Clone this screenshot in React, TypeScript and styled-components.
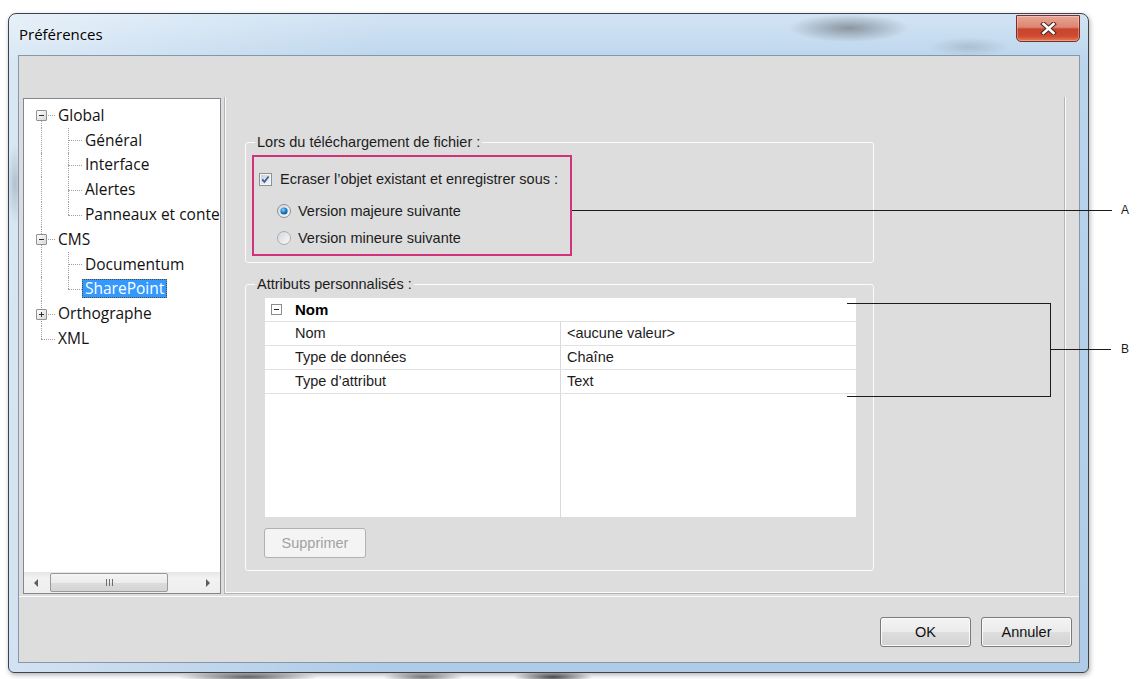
import React from 'react';
import styled, {createGlobalStyle} from 'styled-components';

type TreeItem = {
    label: string
    guides: boolean[]
    first?: boolean
    last?: boolean
    expander?: 'open' | 'closed'
    selected?: boolean
}

const TREE: TreeItem[] = [
    {label: 'Global', guides: [], first: true, expander: 'open'},
    {label: 'Général', guides: [true]},
    {label: 'Interface', guides: [true]},
    {label: 'Alertes', guides: [true]},
    {label: 'Panneaux et conte', guides: [true], last: true},
    {label: 'CMS', guides: [], expander: 'open'},
    {label: 'Documentum', guides: [true]},
    {label: 'SharePoint', guides: [true], last: true, selected: true},
    {label: 'Orthographe', guides: [], expander: 'closed'},
    {label: 'XML', guides: [], last: true},
]

const PROPS = [
    {name: 'Nom', value: '<aucune valeur>'},
    {name: 'Type de données', value: 'Chaîne'},
    {name: 'Type d’attribut', value: 'Text'},
]

const GlobalStyle = createGlobalStyle`
  html, body {
    margin: 0;
    padding: 0;
    background: #fff;
  }
  body {
    width: 1139px;
    height: 679px;
    overflow: hidden;
  }
  * {
    box-sizing: border-box;
  }
`

const CheckBox = () => (
    <svg width="13" height="13" viewBox="0 0 13 13">
        <defs>
            <linearGradient id="cbFill" x1="0" y1="0" x2="1" y2="1">
                <stop offset="0" stopColor="#c4cfdc"/>
                <stop offset="1" stopColor="#f5f8fb"/>
            </linearGradient>
        </defs>
        <rect x="0.5" y="0.5" width="12" height="12" fill="#f6f6f6" stroke="#8e8f8f"/>
        <rect x="2" y="2" width="9" height="9" fill="url(#cbFill)"/>
        <path d="M3.3 6.4 L5.4 8.9 L9.6 3.4" stroke="#3d5a96" strokeWidth="1.7" fill="none"/>
    </svg>
)

const Radio = ({checked}: { checked?: boolean }) => (
    <svg width="14" height="14" viewBox="0 0 14 14">
        <defs>
            <linearGradient id="rdFill" x1="0" y1="0" x2="1" y2="1">
                <stop offset="0" stopColor="#d2d6db"/>
                <stop offset="1" stopColor="#fafafa"/>
            </linearGradient>
            <radialGradient id="rdDot" cx="0.4" cy="0.35" r="0.7">
                <stop offset="0" stopColor="#8fd6ff"/>
                <stop offset="0.5" stopColor="#1f86d2"/>
                <stop offset="1" stopColor="#0c4f8c"/>
            </radialGradient>
        </defs>
        <circle cx="7" cy="7" r="6.5" fill="url(#rdFill)" stroke={checked ? '#8e8f8f' : '#a9abad'}/>
        {checked && <circle cx="7" cy="7" r="3.6" fill="url(#rdDot)"/>}
    </svg>
)

const CloseGlyph = () => (
    <svg width="17" height="13" viewBox="0 0 17 13">
        <path d="M3.5 2 L13.5 11 M13.5 2 L3.5 11" stroke="#4a2a24" strokeWidth="4.6" strokeLinecap="square"/>
        <path d="M3.5 2 L13.5 11 M13.5 2 L3.5 11" stroke="#fff" strokeWidth="2.6" strokeLinecap="square"/>
    </svg>
)

export default function App() {
    return (
        <Page>
            <GlobalStyle/>
            <Window>
                <TitleBar>
                    <Title>Préférences</Title>
                    <CloseButton><CloseGlyph/></CloseButton>
                </TitleBar>
                <Client>
                    <ClientBody>
                        <Tree>
                            <TreeList>
                                {TREE.map(item => (
                                    <TreeRow key={item.label}>
                                        {item.guides.map((on, i) => <Guide key={i} $on={on}/>)}
                                        <Branch $first={item.first} $last={item.last}>
                                            {item.expander && <Expander $open={item.expander === 'open'}/>}
                                        </Branch>
                                        <TreeLabel $selected={item.selected}>{item.label}</TreeLabel>
                                    </TreeRow>
                                ))}
                            </TreeList>
                            <HScroll>
                                <ScrollArrow><Arrow $dir="left"/></ScrollArrow>
                                <Thumb><Grip/></Thumb>
                                <Track/>
                                <ScrollArrow><Arrow $dir="right"/></ScrollArrow>
                            </HScroll>
                        </Tree>
                        <SettingsPanel>
                            <Group $top={36}>
                                <Legend>Lors du téléchargement de fichier :</Legend>
                                <GroupBody $pad="4px 0 6px 6px">
                                    <Highlight>
                                        <OptionRow $top={11}>
                                            <CheckBox/>
                                            <span>Ecraser l’objet existant et enregistrer sous :</span>
                                        </OptionRow>
                                        <OptionRow $top={10} $indent>
                                            <Radio checked/>
                                            <span>Version majeure suivante</span>
                                        </OptionRow>
                                        <OptionRow $top={5} $indent>
                                            <Radio/>
                                            <span>Version mineure suivante</span>
                                        </OptionRow>
                                    </Highlight>
                                </GroupBody>
                            </Group>
                            <Group $top={12}>
                                <Legend>Attributs personnalisés :</Legend>
                                <GroupBody $pad="5px 0 12px 19px">
                                    <PropGrid>
                                        <GridHeader>
                                            <Collapse/>
                                            <span>Nom</span>
                                        </GridHeader>
                                        {PROPS.map(p => (
                                            <PropRow key={p.name}>
                                                <PropName>{p.name}</PropName>
                                                <PropValue>{p.value}</PropValue>
                                            </PropRow>
                                        ))}
                                        <PropFiller>
                                            <PropName/>
                                            <PropValue/>
                                        </PropFiller>
                                    </PropGrid>
                                    <DisabledButton disabled>Supprimer</DisabledButton>
                                </GroupBody>
                            </Group>
                        </SettingsPanel>
                    </ClientBody>
                    <Separator/>
                    <Footer>
                        <DialogButton>OK</DialogButton>
                        <DialogButton>Annuler</DialogButton>
                    </Footer>
                </Client>
            </Window>
            <Backdrop/>
            <Callouts>
                <svg width="1139" height="679" viewBox="0 0 1139 679">
                    <g stroke="#1b1b1b" strokeWidth="1" fill="none" shapeRendering="crispEdges">
                        <line x1="572" y1="210.5" x2="1112" y2="210.5"/>
                        <polyline points="847,303.5 1050.5,303.5 1050.5,396.5 847,396.5"/>
                        <line x1="1050" y1="349.5" x2="1111" y2="349.5"/>
                    </g>
                </svg>
                <CalloutLetter style={{left: 1121, top: 203}}>A</CalloutLetter>
                <CalloutLetter style={{left: 1121, top: 342}}>B</CalloutLetter>
            </Callouts>
        </Page>
    );
}

const Page = styled.div`
  position: relative;
  width: 1139px;
  height: 679px;
  padding: 13px 0 0 8px;
  background: #fff;
  overflow: hidden;
`

const Window = styled.div`
  width: 1081px;
  height: 660px;
  padding: 0 8px 9px 9px;
  border: 1px solid #3a444e;
  border-radius: 8px 8px 6px 6px;
  box-shadow: 1px 2px 5px rgba(0, 0, 0, 0.3);
  background:
    radial-gradient(ellipse 70px 8px at 220px 48px, rgba(80, 90, 100, 0.22), transparent),
    radial-gradient(ellipse 60px 14px at 840px 14px, rgba(60, 60, 60, 0.45), transparent),
    radial-gradient(ellipse 40px 10px at 960px 33px, rgba(90, 100, 110, 0.22), transparent),
    radial-gradient(ellipse 8px 40px at 6px 170px, rgba(60, 80, 100, 0.25), transparent),
    linear-gradient(90deg, rgba(255, 255, 255, 0.45), rgba(255, 255, 255, 0) 35%),
    linear-gradient(#d3e4f4, #bad4ec 50px, #afcbe7);
`

const TitleBar = styled.div`
  height: 41px;
  display: flex;
  justify-content: space-between;
  align-items: flex-start;
`

const Title = styled.div`
  padding-left: 1px;
  line-height: 41px;
  font-family: "Open Sans", "Noto Sans", sans-serif;
  font-size: 15px;
  color: #000;
  text-shadow: 0 0 8px rgba(255, 255, 255, 0.9);
`

const CloseButton = styled.div`
  width: 64px;
  height: 27px;
  margin-top: 1px;
  display: flex;
  align-items: center;
  justify-content: center;
  border: 1px solid #7c2e22;
  border-radius: 0 0 5px 5px;
  background: linear-gradient(#eaa594 0%, #dc8571 45%, #c8442d 52%, #ce492f 80%, #e07c57 100%);
  box-shadow: inset 0 0 0 1px rgba(255, 255, 255, 0.3);
`

const Client = styled.div`
  height: 608px;
  border: 1px solid #8597a9;
  background: #dddddd;
`

const ClientBody = styled.div`
  display: flex;
  align-items: flex-start;
  height: 538px;
  padding: 41px 0 0 4px;
`

const Tree = styled.div`
  width: 198px;
  height: 496px;
  margin-top: 1px;
  display: flex;
  flex-direction: column;
  border: 1px solid #828790;
  background: #fff;
`

const TreeList = styled.div`
  flex: 1;
  padding: 4px 0 0 6px;
  overflow: hidden;
  font-family: "Open Sans", "Noto Sans", sans-serif;
  font-size: 15.5px;
  color: #111;
`

const TreeRow = styled.div`
  height: 24.8px;
  display: flex;
  align-items: center;
`

const Guide = styled.div<{ $on: boolean }>`
  position: relative;
  flex: 0 0 27px;
  align-self: stretch;

  &::before {
    content: "";
    display: ${p => (p.$on ? 'block' : 'none')};
    position: absolute;
    left: 11px;
    top: 0;
    bottom: 0;
    border-left: 1px dotted #a0a0a0;
  }
`

const Branch = styled.div<{ $first?: boolean, $last?: boolean }>`
  position: relative;
  flex: 0 0 25px;
  align-self: stretch;

  &::before {
    content: "";
    position: absolute;
    left: 11px;
    top: ${p => (p.$first ? '50%' : '0')};
    bottom: ${p => (p.$last ? '50%' : '0')};
    border-left: 1px dotted #a0a0a0;
  }
  &::after {
    content: "";
    position: absolute;
    left: 11px;
    right: 0;
    top: 50%;
    border-top: 1px dotted #a0a0a0;
  }
`

const Expander = styled.div<{ $open: boolean }>`
  position: absolute;
  z-index: 1;
  left: 6px;
  top: 50%;
  width: 11px;
  height: 11px;
  margin-top: -5px;
  border: 1px solid #919191;
  border-radius: 1px;
  background: linear-gradient(135deg, #ffffff, #d7d7d7);

  &::before {
    content: "";
    position: absolute;
    left: 2px;
    top: 4px;
    width: 5px;
    height: 1px;
    background: #303030;
  }
  &::after {
    content: "";
    display: ${p => (p.$open ? 'none' : 'block')};
    position: absolute;
    left: 4px;
    top: 2px;
    width: 1px;
    height: 5px;
    background: #303030;
  }
`

const TreeLabel = styled.span<{ $selected?: boolean }>`
  padding: 0 3px;
  line-height: 19px;
  white-space: nowrap;
  background: ${p => (p.$selected ? '#3399ff' : 'transparent')};
  color: ${p => (p.$selected ? '#fff' : 'inherit')};
  outline: ${p => (p.$selected ? '1px dotted #5a4a2a' : 'none')};
  outline-offset: -1px;
`

const HScroll = styled.div`
  height: 21px;
  display: flex;
  align-items: center;
  background: linear-gradient(#e6e6e6, #f2f2f2 30%, #eeeeee);
`

const ScrollArrow = styled.div`
  flex: 0 0 24px;
  height: 100%;
  display: flex;
  align-items: center;
  justify-content: center;
`

const Arrow = styled.div<{ $dir: 'left' | 'right' }>`
  width: 0;
  height: 0;
  border-top: 4px solid transparent;
  border-bottom: 4px solid transparent;
  ${p => (p.$dir === 'left' ? 'border-right: 4px solid #5c5c5c;' : 'border-left: 4px solid #5c5c5c;')}
`

const Thumb = styled.div`
  flex: 0 0 118px;
  height: 19px;
  margin-left: 2px;
  display: flex;
  align-items: center;
  justify-content: center;
  border: 1px solid #9a9a9a;
  border-radius: 2px;
  background: linear-gradient(#f4f4f4, #ececec 50%, #dcdcdc 51%, #d4d4d4);
`

const Grip = styled.div`
  width: 7px;
  height: 7px;
  background: repeating-linear-gradient(90deg, #6e6e6e 0 1px, transparent 1px 3px);
`

const Track = styled.div`
  flex: 1;
`

const SettingsPanel = styled.div`
  width: 842px;
  height: 497px;
  margin-left: 3px;
  padding-left: 20px;
  border-left: 1px solid #b4b4b4;
  border-right: 1px solid #fafafa;
  border-bottom: 1px solid #b4b4b4;
  box-shadow: inset 1px 0 0 #fafafa, inset -1px 0 0 #b4b4b4, inset 0 -1px 0 #fafafa;
  font-family: "Liberation Sans", Arial, sans-serif;
  font-size: 14.5px;
  color: #1c1c1c;
`

const Group = styled.fieldset<{ $top: number }>`
  width: 629px;
  min-width: 0;
  margin: ${p => p.$top}px 0 0;
  padding: 0;
  border: 1px solid #fbfbfb;
  border-radius: 3px;
`

const Legend = styled.legend`
  margin-left: 9px;
  padding: 0 2px;
  line-height: 18px;
`

const GroupBody = styled.div<{ $pad: string }>`
  padding: ${p => p.$pad};
`

const Highlight = styled.div`
  width: 320px;
  height: 101px;
  padding-left: 5px;
  border: 2px solid #d2327c;
`

const OptionRow = styled.div<{ $top: number, $indent?: boolean }>`
  height: 22px;
  margin-top: ${p => p.$top}px;
  padding-left: ${p => (p.$indent ? 18 : 0)}px;
  display: flex;
  align-items: center;
  gap: ${p => (p.$indent ? 7 : 8)}px;
  white-space: nowrap;

  svg {
    flex: none;
  }
`

const PropGrid = styled.div`
  width: 591px;
  height: 219px;
  display: flex;
  flex-direction: column;
  background: #fff;
`

const GridHeader = styled.div`
  height: 24px;
  flex: none;
  display: flex;
  align-items: center;
  padding-left: 6px;
  border-bottom: 1px solid #e2e2e2;
  font-weight: bold;
  font-size: 15px;
  color: #000;

  span {
    margin-left: 13px;
  }
`

const Collapse = styled.div`
  position: relative;
  width: 11px;
  height: 11px;
  border: 1px solid #8c8c8c;
  background: #fff;

  &::after {
    content: "";
    position: absolute;
    left: 2px;
    top: 4px;
    width: 5px;
    height: 1px;
    background: #222;
  }
`

const PropRow = styled.div`
  height: 24px;
  flex: none;
  display: grid;
  grid-template-columns: 296px 1fr;
  border-bottom: 1px solid #e2e2e2;
  line-height: 23px;
`

const PropFiller = styled.div`
  flex: 1;
  display: grid;
  grid-template-columns: 296px 1fr;
`

const PropName = styled.div`
  padding-left: 30px;
  border-right: 1px solid #d9d9d9;
`

const PropValue = styled.div`
  padding-left: 6px;
`

const DisabledButton = styled.button`
  display: block;
  width: 102px;
  height: 30px;
  margin: 11px 0 0 -1px;
  padding: 0;
  border: 1px solid #adb2b5;
  border-radius: 3px;
  background: #f4f4f4;
  font-family: "Liberation Sans", Arial, sans-serif;
  font-size: 14.5px;
  color: #a2a2a2;
`

const Separator = styled.div`
  height: 1px;
  margin-top: 2px;
  background: #fafafa;
`

const Footer = styled.div`
  display: flex;
  justify-content: flex-end;
  gap: 10px;
  padding: 20px 7px 0 0;
`

const DialogButton = styled.button`
  width: 91px;
  height: 30px;
  padding: 0;
  border: 1px solid #7a7a7a;
  border-radius: 3px;
  background: linear-gradient(#f3f3f3 0%, #ebebeb 50%, #dedede 51%, #d2d2d2 100%);
  box-shadow: inset 0 0 0 1px #fbfbfb;
  font-family: "Liberation Sans", Arial, sans-serif;
  font-size: 14.5px;
  color: #111;
`

const Backdrop = styled.div`
  height: 6px;
  background:
    radial-gradient(ellipse 70px 6px at 240px 4px, rgba(40, 40, 40, 0.7), transparent),
    radial-gradient(ellipse 40px 6px at 415px 4px, rgba(40, 40, 40, 0.6), transparent),
    radial-gradient(ellipse 40px 6px at 545px 4px, rgba(30, 30, 30, 0.8), transparent);
`

const Callouts = styled.div`
  position: absolute;
  inset: 0;
  pointer-events: none;

  svg {
    position: absolute;
    left: 0;
    top: 0;
  }
`

const CalloutLetter = styled.span`
  position: absolute;
  font-family: "Liberation Sans", Arial, sans-serif;
  font-size: 12px;
  line-height: 14px;
  color: #1b1b1b;
`
